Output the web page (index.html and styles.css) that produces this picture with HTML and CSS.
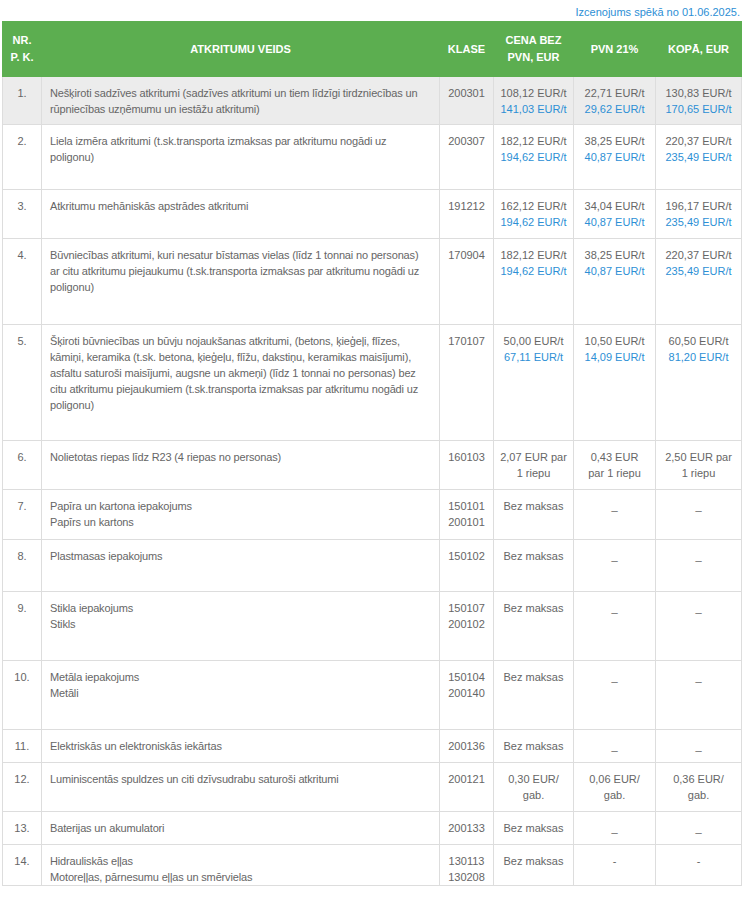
FILE: index.html
```html
<!DOCTYPE html>
<html lang="lv">
<head>
<meta charset="utf-8">
<title>Cenas</title>
<link rel="stylesheet" href="styles.css">
</head>
<body>
<div class="page">
  <p class="note">Izcenojums spēkā no 01.06.2025.</p>
  <table class="prices">
    <colgroup>
      <col class="col-nr"><col class="col-desc"><col class="col-klase"><col class="col-cena"><col class="col-pvn"><col class="col-kopa">
    </colgroup>
    <thead>
      <tr>
        <th>NR.<br>P. K.</th>
        <th>ATKRITUMU VEIDS</th>
        <th>KLASE</th>
        <th>CENA BEZ<br>PVN, EUR</th>
        <th>PVN 21%</th>
        <th>KOPĀ, EUR</th>
      </tr>
    </thead>
    <tbody>
      <tr class="hl h48">
        <td class="nr">1.</td>
        <td class="desc">Nešķiroti sadzīves atkritumi (sadzīves atkritumi un tiem līdzīgi tirdzniecības un rūpniecības uzņēmumu un iestāžu atkritumi)</td>
        <td class="c">200301</td>
        <td class="c">108,12 EUR/t<br><span class="blue">141,03 EUR/t</span></td>
        <td class="c">22,71 EUR/t<br><span class="blue">29,62 EUR/t</span></td>
        <td class="c">130,83 EUR/t<br><span class="blue">170,65 EUR/t</span></td>
      </tr>
      <tr class="h65">
        <td class="nr">2.</td>
        <td class="desc">Liela izmēra atkritumi (t.sk.transporta izmaksas par atkritumu nogādi uz poligonu)</td>
        <td class="c">200307</td>
        <td class="c">182,12 EUR/t<br><span class="blue">194,62 EUR/t</span></td>
        <td class="c">38,25 EUR/t<br><span class="blue">40,87 EUR/t</span></td>
        <td class="c">220,37 EUR/t<br><span class="blue">235,49 EUR/t</span></td>
      </tr>
      <tr class="h49">
        <td class="nr">3.</td>
        <td class="desc">Atkritumu mehāniskās apstrādes atkritumi</td>
        <td class="c">191212</td>
        <td class="c">162,12 EUR/t<br><span class="blue">194,62 EUR/t</span></td>
        <td class="c">34,04 EUR/t<br><span class="blue">40,87 EUR/t</span></td>
        <td class="c">196,17 EUR/t<br><span class="blue">235,49 EUR/t</span></td>
      </tr>
      <tr class="h86">
        <td class="nr">4.</td>
        <td class="desc">Būvniecības atkritumi, kuri nesatur bīstamas vielas (līdz 1 tonnai no personas) ar citu atkritumu piejaukumu (t.sk.transporta izmaksas par atkritumu nogādi uz poligonu)</td>
        <td class="c">170904</td>
        <td class="c">182,12 EUR/t<br><span class="blue">194,62 EUR/t</span></td>
        <td class="c">38,25 EUR/t<br><span class="blue">40,87 EUR/t</span></td>
        <td class="c">220,37 EUR/t<br><span class="blue">235,49 EUR/t</span></td>
      </tr>
      <tr class="h116">
        <td class="nr">5.</td>
        <td class="desc">Šķiroti būvniecības un būvju nojaukšanas atkritumi, (betons, ķieģeļi, flīzes, kāmiņi, keramika (t.sk. betona, ķieģeļu, flīžu, dakstiņu, keramikas maisījumi), asfaltu saturoši maisījumi, augsne un akmeņi) (līdz 1 tonnai no personas) bez citu atkritumu piejaukumiem (t.sk.transporta izmaksas par atkritumu nogādi uz poligonu)</td>
        <td class="c">170107</td>
        <td class="c">50,00 EUR/t<br><span class="blue">67,11 EUR/t</span></td>
        <td class="c">10,50 EUR/t<br><span class="blue">14,09 EUR/t</span></td>
        <td class="c">60,50 EUR/t<br><span class="blue">81,20 EUR/t</span></td>
      </tr>
      <tr class="h49">
        <td class="nr">6.</td>
        <td class="desc">Nolietotas riepas līdz R23 (4 riepas no personas)</td>
        <td class="c">160103</td>
        <td class="c">2,07 EUR par<br>1 riepu</td>
        <td class="c">0,43 EUR<br>par 1 riepu</td>
        <td class="c">2,50 EUR par<br>1 riepu</td>
      </tr>
      <tr class="h50">
        <td class="nr">7.</td>
        <td class="desc">Papīra un kartona iepakojums<br>Papīrs un kartons</td>
        <td class="c">150101<br>200101</td>
        <td class="c">Bez maksas</td>
        <td class="c">_</td>
        <td class="c">_</td>
      </tr>
      <tr class="h52">
        <td class="nr">8.</td>
        <td class="desc">Plastmasas iepakojums</td>
        <td class="c">150102</td>
        <td class="c">Bez maksas</td>
        <td class="c">_</td>
        <td class="c">_</td>
      </tr>
      <tr class="h69">
        <td class="nr">9.</td>
        <td class="desc">Stikla iepakojums<br>Stikls</td>
        <td class="c">150107<br>200102</td>
        <td class="c">Bez maksas</td>
        <td class="c">_</td>
        <td class="c">_</td>
      </tr>
      <tr class="h69">
        <td class="nr">10.</td>
        <td class="desc">Metāla iepakojums<br>Metāli</td>
        <td class="c">150104<br>200140</td>
        <td class="c">Bez maksas</td>
        <td class="c">_</td>
        <td class="c">_</td>
      </tr>
      <tr class="h33">
        <td class="nr">11.</td>
        <td class="desc">Elektriskās un elektroniskās iekārtas</td>
        <td class="c">200136</td>
        <td class="c">Bez maksas</td>
        <td class="c">_</td>
        <td class="c">_</td>
      </tr>
      <tr class="h49">
        <td class="nr">12.</td>
        <td class="desc">Luminiscentās spuldzes un citi dzīvsudrabu saturoši atkritumi</td>
        <td class="c">200121</td>
        <td class="c">0,30 EUR/<br>gab.</td>
        <td class="c">0,06 EUR/<br>gab.</td>
        <td class="c">0,36 EUR/<br>gab.</td>
      </tr>
      <tr class="h33">
        <td class="nr">13.</td>
        <td class="desc">Baterijas un akumulatori</td>
        <td class="c">200133</td>
        <td class="c">Bez maksas</td>
        <td class="c">_</td>
        <td class="c">_</td>
      </tr>
      <tr class="last">
        <td class="nr">14.</td>
        <td class="desc">Hidrauliskās eļļas<br>Motoreļļas, pārnesumu eļļas un smērvielas</td>
        <td class="c">130113<br>130208</td>
        <td class="c">Bez maksas</td>
        <td class="c">-</td>
        <td class="c">-</td>
      </tr>
    </tbody>
  </table>
</div>
</body>
</html>
```

FILE: styles.css
```css
html, body {
  margin: 0;
  padding: 0;
  background: #ffffff;
}

.page {
  padding: 0 2px;
  font-family: "Liberation Sans", Arial, sans-serif;
  font-size: 11px;
  color: #666666;
}

.note {
  margin: 0;
  padding: 4px 1px 1px 0;
  line-height: 16px;
  text-align: right;
  color: #2d8fd5;
}

.prices {
  width: 739px;
  border-collapse: collapse;
  table-layout: fixed;
}

.col-nr { width: 39px; }
.col-desc { width: 398px; }
.col-klase { width: 54px; }
.col-cena { width: 80px; }
.col-pvn { width: 82px; }
.col-kopa { width: 86px; }

.prices th {
  height: 54px;
  padding: 0 4px;
  background: #5cae50;
  border: 1px solid #5cae50;
  color: #ffffff;
  font-weight: bold;
  line-height: 17px;
  text-align: center;
  vertical-align: middle;
  text-transform: uppercase;
}

.prices td {
  border: 1px solid #dddddd;
  padding: 8px 6px 0;
  line-height: 16px;
  vertical-align: top;
}

.prices td.nr {
  text-align: center;
  padding-left: 2px;
  padding-right: 2px;
}

.prices td.desc {
  padding-left: 8px;
  padding-right: 10px;
  letter-spacing: -0.15px;
}

.prices td.c {
  text-align: center;
  padding-left: 2px;
  padding-right: 2px;
}

.blue {
  color: #2d8fd5;
}

.hl td {
  background: #ececec;
}

.h33 { height: 33px; }
.h48 { height: 48px; }
.h49 { height: 49px; }
.h50 { height: 50px; }
.h52 { height: 52px; }
.h65 { height: 65px; }
.h69 { height: 69px; }
.h86 { height: 86px; }
.h116 { height: 116px; }

.last td {
  padding-bottom: 0;
}
```
